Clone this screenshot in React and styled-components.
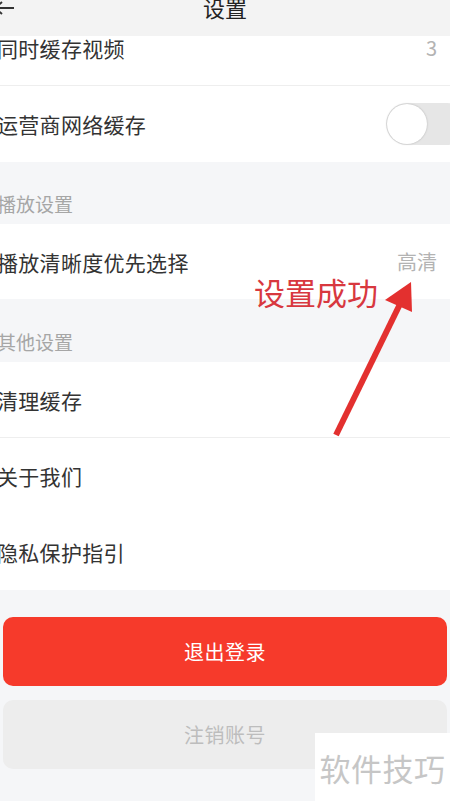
import React from "react";
import styled, { createGlobalStyle } from "styled-components";

const GlobalStyle = createGlobalStyle`
  html, body {
    margin: 0;
    padding: 0;
    background: #f5f6f8;
  }
  body {
    font-family: "Noto Sans CJK SC", "Noto Sans", "Liberation Sans", sans-serif;
  }
`;

const Screen = styled.div`
  position: relative;
  width: 450px;
  height: 801px;
  overflow: hidden;
  background: #f5f6f8;
`;

const Header = styled.div`
  position: absolute;
  top: 0;
  left: 0;
  right: 0;
  height: 36px;
  background: #f3f3f3;
  z-index: 2;
  display: flex;
  justify-content: center;
  align-items: flex-start;
`;

const Back = styled.svg`
  position: absolute;
  left: -8px;
  top: -2px;
`;

const Title = styled.h1`
  margin: -8px 0 0;
  font-size: 22px;
  line-height: 30px;
  font-weight: 400;
  color: #222;
`;

const List = styled.div`
  padding-top: 10px;
  display: flex;
  flex-direction: column;
`;

const Row = styled.div`
  height: ${(p) => p.$h || 76}px;
  background: #fff;
  display: flex;
  align-items: center;
  justify-content: space-between;
  padding-right: 13px;
  overflow: hidden;
  box-sizing: border-box;
  border-bottom: ${(p) => (p.$line ? "1px solid #eeeeee" : "none")};
`;

const Label = styled.span`
  font-size: 21px;
  color: #333;
  margin-left: -3px;
  letter-spacing: 0.3px;
`;

const Value = styled.span`
  font-size: 20px;
  color: #b3b3b3;
`;

const Section = styled.div`
  height: ${(p) => p.$h || 62}px;
  display: flex;
  align-items: flex-end;
  padding-bottom: 9px;
  box-sizing: border-box;
  font-size: 19px;
  line-height: 22px;
  color: #a6a6a6;
  & > span {
    margin-left: -3px;
  }
`;

const Toggle = styled.div`
  position: relative;
  width: 82px;
  height: 42px;
  margin-right: -31px;
  border-radius: 21px;
  background: #e6e6e6;
  &::after {
    content: "";
    position: absolute;
    left: 1px;
    top: 1px;
    width: 40px;
    height: 40px;
    border-radius: 50%;
    background: #fff;
    box-shadow: 0 0 2px rgba(0, 0, 0, 0.25);
  }
`;

const Buttons = styled.div`
  padding: 27px 3px 0;
  display: flex;
  flex-direction: column;
  gap: 14px;
`;

const Button = styled.div`
  height: 69px;
  border-radius: 10px;
  display: flex;
  align-items: center;
  justify-content: center;
  font-size: 20px;
  letter-spacing: 0.5px;
  background: ${(p) => (p.$danger ? "#f63a2b" : "#ededed")};
  color: ${(p) => (p.$danger ? "#fff" : "#bdbdbd")};
`;

const Note = styled.div`
  position: absolute;
  left: 254px;
  top: 272px;
  font-size: 31px;
  line-height: 40px;
  color: #d8383f;
  z-index: 3;
`;

const Arrow = styled.svg`
  position: absolute;
  left: 0;
  top: 0;
  pointer-events: none;
  z-index: 3;
`;

const Watermark = styled.div`
  position: absolute;
  left: 315px;
  top: 733px;
  width: 135px;
  height: 68px;
  background: #fff;
  display: flex;
  align-items: center;
  justify-content: center;
  font-size: 31px;
  color: #c6c6c6;
  letter-spacing: 0.5px;
  z-index: 3;
`;

export default function App() {
  return (
    <>
      <GlobalStyle />
      <Screen>
        <Header>
          <Back width="24" height="24" viewBox="0 0 24 24">
            <path d="M22 10H4M10 4L3 10l7 6" stroke="#333" strokeWidth="2" fill="none" />
          </Back>
          <Title>设置</Title>
        </Header>
        <List>
          <Row $line>
            <Label>同时缓存视频</Label>
            <Value>3</Value>
          </Row>
          <Row>
            <Label>运营商网络缓存</Label>
            <Toggle />
          </Row>
          <Section>
            <span>播放设置</span>
          </Section>
          <Row $h={75}>
            <Label>播放清晰度优先选择</Label>
            <Value>高清</Value>
          </Row>
          <Section $h={63}>
            <span>其他设置</span>
          </Section>
          <Row $line>
            <Label>清理缓存</Label>
          </Row>
          <Row>
            <Label>关于我们</Label>
          </Row>
          <Row>
            <Label>隐私保护指引</Label>
          </Row>
        </List>
        <Buttons>
          <Button $danger>退出登录</Button>
          <Button>注销账号</Button>
        </Buttons>
        <Note>设置成功</Note>
        <Arrow width="450" height="801" viewBox="0 0 450 801">
          <line x1="336" y1="435" x2="401" y2="302" stroke="#e3302f" strokeWidth="6" />
          <polygon points="411,282 385,300 412,312" fill="#e3302f" />
        </Arrow>
        <Watermark>软件技巧</Watermark>
      </Screen>
    </>
  );
}
